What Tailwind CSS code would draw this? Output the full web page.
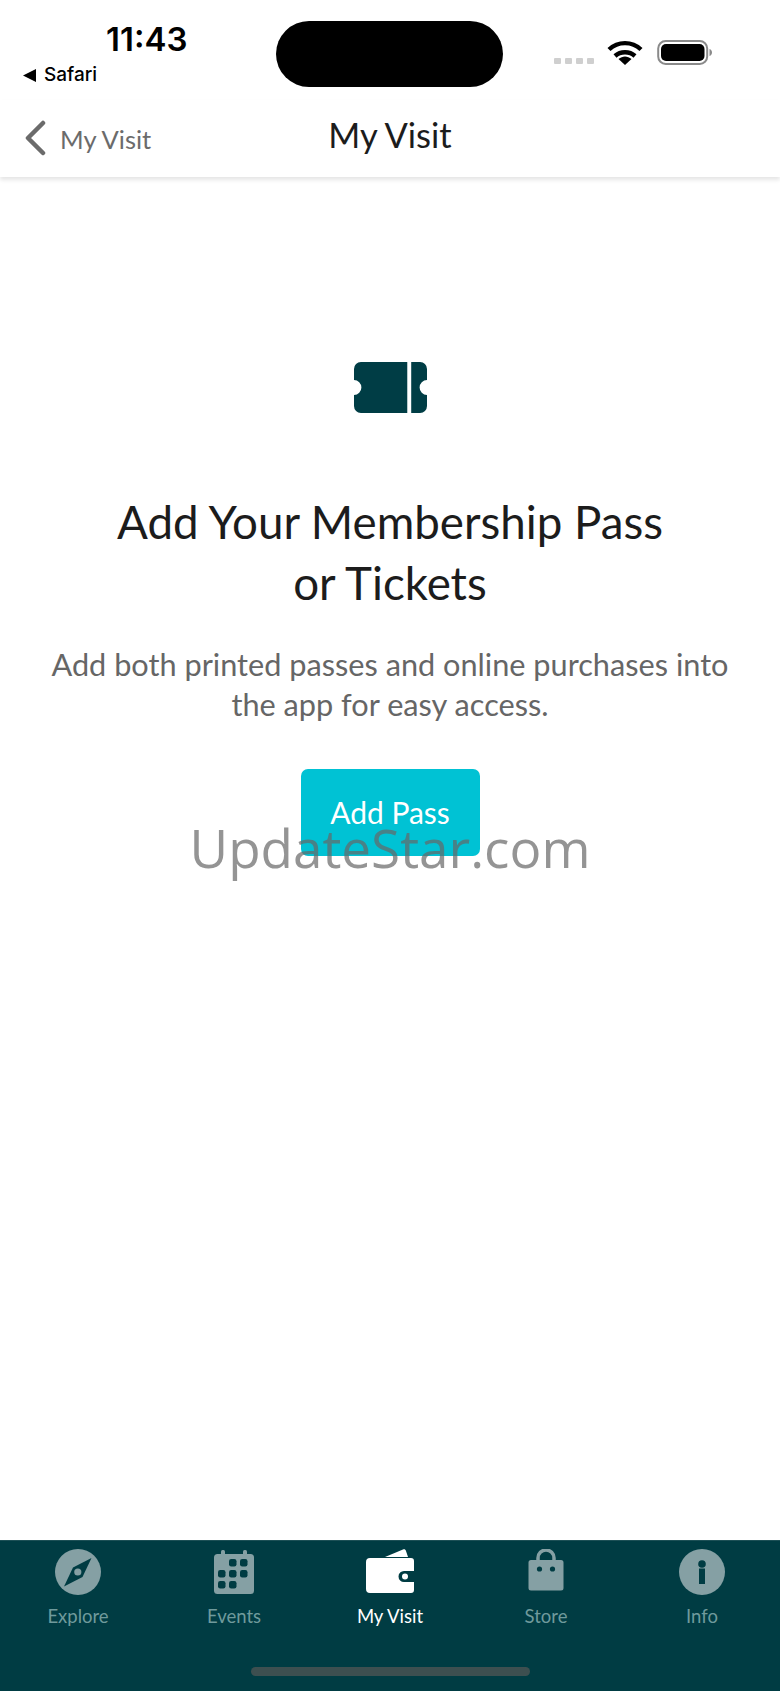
<!DOCTYPE html>
<html lang="en">
<head>
    <meta charset="UTF-8">
    <meta name="viewport" content="width=device-width, initial-scale=1.0">
    <title>My Visit</title>
    <script src="https://cdn.jsdelivr.net/npm/@tailwindcss/browser@4"></script>
</head>
<body>
    <div class="relative flex h-[1691px] w-[780px] flex-col overflow-hidden bg-white font-['Lato',sans-serif]">
        <!-- status bar -->
        <div class="flex h-[100px] shrink-0">
            <div class="w-[276px] font-['Inter',sans-serif] text-black">
                <div class="pl-[106px] pt-[19px] text-[33px] font-semibold leading-[40px]">11:43</div>
                <div class="flex items-center gap-[8px] pl-[23px] pt-[4px] text-[19px] font-medium leading-[24px]">
                    <svg width="13" height="13" viewBox="0 0 13 13"><path d="M13 0v13L0 6.5z" fill="#000"/></svg>
                    <span>Safari</span>
                </div>
            </div>
            <div class="mt-[21px] h-[66px] w-[227px] rounded-full bg-black"></div>
            <div class="flex items-start pl-[51px] pt-[39px]">
                <div class="mt-[19px] flex gap-[4px]">
                    <span class="h-[6px] w-[7px] rounded-[1px] bg-[#cfcfcf]"></span>
                    <span class="h-[6px] w-[7px] rounded-[1px] bg-[#cfcfcf]"></span>
                    <span class="h-[6px] w-[7px] rounded-[1px] bg-[#cfcfcf]"></span>
                    <span class="h-[6px] w-[7px] rounded-[1px] bg-[#cfcfcf]"></span>
                </div>
                <svg class="ml-[13px]" width="36" height="26" viewBox="0 0 36 26" fill="none" stroke="#000" stroke-width="4.4">
                    <path d="M2 10.5C11 2 25 2 34 10.5"/>
                    <path d="M8 17C13.5 12 22.5 12 28 17"/>
                    <path d="M11.5 20L18 26L24.5 20C20.5 16.5 15.5 16.5 11.5 20Z" fill="#000" stroke="none"/>
                </svg>
                <svg class="ml-[14px]" width="56" height="26" viewBox="0 0 56 26">
                    <rect x="1.2" y="2" width="49" height="23" rx="7.5" fill="none" stroke="#8a8a8a" stroke-width="2"/>
                    <rect x="4" y="5" width="43.5" height="17" rx="5" fill="#000"/>
                    <path d="M52.5 10v7c1.8-.6 2.5-2 2.5-3.5s-.7-2.9-2.5-3.5z" fill="#8a8a8a"/>
                </svg>
            </div>
        </div>

        <!-- nav bar -->
        <div class="relative z-10 flex h-[77px] shrink-0 items-center bg-white shadow-[0_3px_4px_rgba(0,0,0,0.1)]">
            <div class="flex w-[276px] items-center pl-[24px]">
                <svg class="mb-[2px]" width="22" height="36" viewBox="0 0 22 36" fill="none" stroke="#6b6b6b" stroke-width="4.5" stroke-linecap="round" stroke-linejoin="round">
                    <path d="M19 3L4 18L19 33"/>
                </svg>
                <span class="ml-[14px] text-[25.5px] leading-[30px] text-[#6b6b6b]">My Visit</span>
            </div>
            <div class="mb-[8px] w-[228px] text-center text-[34.5px] leading-[40px] text-[#1c1c1c]">My Visit</div>
        </div>

        <!-- empty state -->
        <div class="flex flex-1 flex-col items-center pt-[185px]">
            <svg width="73" height="51" viewBox="0 0 74 51" preserveAspectRatio="none" fill="#003d45">
                <path d="M7 0H54V51H7a7 7 0 0 1-7-7V33a7.5 7.5 0 0 0 0-15V7a7 7 0 0 1 7-7Z"/>
                <path d="M58 0H67a7 7 0 0 1 7 7V18a7.5 7.5 0 0 0 0 15V44a7 7 0 0 1-7 7H58Z"/>
            </svg>
            <h1 class="mt-[78px] text-center text-[45.7px] font-normal leading-[61px] text-[#1c1c1c]">Add Your Membership Pass<br>or Tickets</h1>
            <p class="mt-[32px] text-center text-[30.7px] leading-[40px] text-[#666666]">Add both printed passes and online purchases into<br>the app for easy access.</p>
            <button class="mt-[44px] h-[87px] w-[179px] rounded-[7px] bg-[#00c2d4] text-[30px] text-white">Add Pass</button>
        </div>

        <!-- tab bar -->
        <div class="shrink-0 border-t border-[#1d5056] bg-[#003c43]">
            <div class="flex h-[126px] pt-[8px] text-[18.5px] leading-[24px] text-[#6f9a9c]">
                <div class="flex flex-1 flex-col items-center">
                    <svg width="46" height="46" viewBox="0 0 46 46">
                        <circle cx="23" cy="23" r="23" fill="#85a0a4"/>
                        <path d="M36.5 9L27.5 28L9 37.5L18 18.5Z" fill="#003c43"/>
                        <circle cx="22.8" cy="23" r="3.6" fill="#85a0a4"/>
                    </svg>
                    <span class="mt-[9px]">Explore</span>
                </div>
                <div class="flex flex-1 flex-col items-center">
                    <svg width="42" height="46" viewBox="0 0 42 46" fill="#85a0a4">
                        <rect x="1" y="5" width="40" height="40" rx="3.5"/>
                        <rect x="8" y="1" width="4" height="8" rx="1.5"/>
                        <rect x="30" y="1" width="4" height="8" rx="1.5"/>
                        <g fill="#003c43">
                            <rect x="16" y="10" width="7.5" height="7.5" rx="2.2"/>
                            <rect x="27" y="10" width="7.5" height="7.5" rx="2.2"/>
                            <rect x="5" y="21" width="7.5" height="7.5" rx="2.2"/>
                            <rect x="16" y="21" width="7.5" height="7.5" rx="2.2"/>
                            <rect x="27" y="21" width="7.5" height="7.5" rx="2.2"/>
                            <rect x="5" y="32" width="7.5" height="7.5" rx="2.2"/>
                            <rect x="16" y="32" width="7.5" height="7.5" rx="2.2"/>
                        </g>
                    </svg>
                    <span class="mt-[9px]">Events</span>
                </div>
                <div class="flex flex-1 flex-col items-center text-white">
                    <svg width="48" height="46" viewBox="0 0 48 46" fill="#fff">
                        <path d="M19 8L37 0.5C38.5 0 39.5 0.5 40 2L42 8Z"/>
                        <path d="M4 9H45a3 3 0 0 1 3 3V22H38a5.5 5.5 0 0 0 0 11H48V41a3 3 0 0 1-3 3H4a4 4 0 0 1-4-4V13a4 4 0 0 1 4-4Z"/>
                        <circle cx="39" cy="27.5" r="3" />
                    </svg>
                    <span class="mt-[9px]">My Visit</span>
                </div>
                <div class="flex flex-1 flex-col items-center">
                    <svg width="36" height="46" viewBox="0 0 36 46" fill="#85a0a4">
                        <path d="M10 12V9a8 8 0 0 1 16 0v3" fill="none" stroke="#85a0a4" stroke-width="3.5"/>
                        <path d="M3 11H33a2.5 2.5 0 0 1 2.5 2.5V39a2.5 2.5 0 0 1-2.5 2.5H3A2.5 2.5 0 0 1 .5 39V13.5A2.5 2.5 0 0 1 3 11Z"/>
                        <circle cx="11.5" cy="20" r="2.6" fill="#003c43"/>
                        <circle cx="24.5" cy="20" r="2.6" fill="#003c43"/>
                    </svg>
                    <span class="mt-[9px]">Store</span>
                </div>
                <div class="flex flex-1 flex-col items-center">
                    <svg width="46" height="46" viewBox="0 0 46 46">
                        <circle cx="23" cy="23" r="23" fill="#85a0a4"/>
                        <circle cx="23" cy="15" r="3.8" fill="#003c43"/>
                        <rect x="20" y="19.5" width="6" height="15.5" fill="#003c43"/>
                    </svg>
                    <span class="mt-[9px]">Info</span>
                </div>
            </div>
            <div class="mx-auto mb-[15px] h-[9px] w-[279px] rounded-full bg-[#3d4f50]"></div>
        </div>

        <!-- watermark over the button -->
        <div class="pointer-events-none absolute left-0 right-0 top-[813px] text-center font-['Open_Sans',sans-serif] text-[53px] font-normal leading-[70px] text-[#666666]/70">UpdateStar.com</div>
    </div>
</body>
</html>
